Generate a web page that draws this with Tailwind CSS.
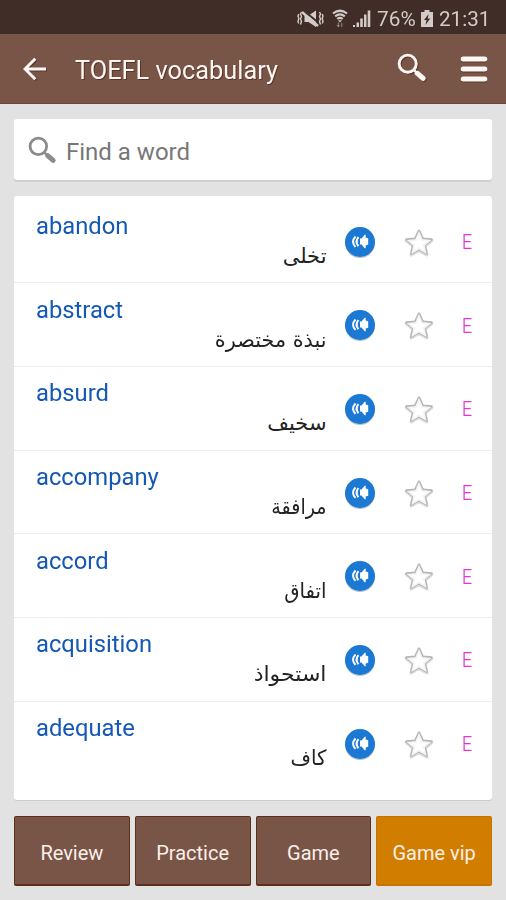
<!DOCTYPE html>
<html lang="en">
<head>
<meta charset="utf-8">
<meta name="viewport" content="width=device-width">
<title>TOEFL vocabulary</title>
<script src="https://cdn.jsdelivr.net/npm/@tailwindcss/browser@4"></script>
</head>
<body class="w-[506px] h-[900px] overflow-hidden bg-[#e2e2e2] font-[Roboto,sans-serif] flex flex-col">
<svg class="hidden">
  <symbol id="search" viewBox="0 0 28 28"><circle cx="10" cy="10" r="8" fill="none" stroke="currentColor" stroke-width="2.7"/><path d="M15.7 15.7l3 3" stroke="currentColor" stroke-width="2.4"/><path d="M19 19l5.3 4.6" stroke="currentColor" stroke-width="4.800" stroke-linecap="round"/></symbol>
</svg>

<header class="shrink-0">
  <div class="h-[34px] bg-[#402d27] flex items-center justify-end pr-[15px] pt-[3px] text-[#d3cbc7]">
    <svg class="w-[27px] h-[20px] mr-[8px]" viewBox="0 0 27 20" fill="none" stroke="currentColor">
      <path d="M7.500 6.500h4l7.500-5v16.500l-7.500-5h-4z" fill="currentColor" stroke="none"/>
      <path d="M6 1l17 14" stroke="#402d27" stroke-width="2"/><path d="M5 3l16 14" stroke-width="2.400"/>
      <path d="M4.500 3l-1 2 1 2.500-1 2.500 1 2.500-1 3M1.800 5l-.8 2 .8 2.500-.8 3 .8 2M22.500 3l1 2-1 2.500 1 2.500-1 2.500 1 3M25.200 5l.8 2-.8 2.500.8 3-.8 2" stroke-width="1.400"/>
    </svg>
    <svg class="w-[16px] h-[20px] mr-[5px]" viewBox="0 0 16 20" fill="none" stroke="currentColor">
      <path d="M1 4.500Q8-1 15 4.500M3.200 7.300q4.800-3.800 9.600 0M5.300 10q2.700-2.200 5.400 0" stroke-width="2.200"/><path d="M6 11.200h4L8 13.500z" fill="currentColor" stroke="none"/><path d="M6.300 13.500v4M4.800 16l1.500 1.700L7.500 16M9.800 18v-4" stroke-width="1" opacity=".6"/>
    </svg>
    <svg class="w-[18px] h-[20px] mr-[6px]" viewBox="0 0 18 20" fill="currentColor"><path d="M0 16h2v2H0zM3.500 13.500H6V18H3.500zM7.200 9.500h2.600V18H7.200zM11 5.500h2.500V18H11zM14.700 1.500h2.600V18h-2.600z"/></svg>
    <span class="text-[20px] leading-5 w-[39px] whitespace-nowrap"><span class="inline-block origin-left scale-x-[1.040]">76%</span></span>
    <svg class="w-[12px] h-[19px] ml-[5px] mr-[6px]" viewBox="0 0 12 19"><path d="M3.500 1h5v2H12v15H0V3h3.500z" fill="currentColor"/><path d="M7.600 5L3 11h2.500L4.500 16 9.200 9.500H6.700z" fill="#402d27"/></svg>
    <span class="text-[20px] leading-5 w-[52px] whitespace-nowrap"><span class="inline-block origin-left scale-x-[1.030]">21:31</span></span>
  </div>
  <div class="h-[70px] bg-[#795548] border-b border-[#6b483c] flex items-center text-[#fbf7f4]">
    <svg class="w-[24px] h-[24px] ml-[23px] mt-[1px] drop-shadow-[1px_1px_0_#5d3322]" viewBox="0 0 24 24" fill="none" stroke="currentColor" stroke-width="3"><path d="M23 12H2M12.300 1.700L2 12l10.300 10.300"/></svg>
    <h1 class="ml-[28px] mt-[4px] text-[25px] whitespace-nowrap w-[204px] [text-shadow:1px_1px_0_#5d3322]"><span class="inline-block origin-left scale-x-[1.013]">TOEFL vocabulary</span></h1>
    <svg class="w-[30px] h-[30px] ml-[118px] -mt-[1px] drop-shadow-[1px_1px_0_#5d3322]"><use href="#search"/></svg>
    <svg class="w-[28px] h-[28px] ml-[33px] drop-shadow-[0_1px_0_#5d3322]" viewBox="0 0 28 28" stroke="currentColor" stroke-width="5" stroke-linecap="round"><path d="M3.200 4h21.600M3.200 14h21.600M3.200 24h21.600"/></svg>
  </div>
</header>

<main class="px-[14px] pt-[15px] flex flex-col">
  <div class="h-[61px] rounded-[3px] bg-white shadow-[0_2px_0_#cfcfcf] flex items-center pl-[14px] text-[#777]">
    <svg class="w-[29px] h-[29px] mt-[1px] text-[#8b8b8b]"><use href="#search"/></svg>
    <span class="ml-[9px] mt-[4px] text-[24px] whitespace-nowrap">Find a word</span>
  </div>
  <ul id="words" class="mt-[15.500px] h-[604.500px] pt-[4px] rounded-[3px] bg-white shadow-[0_1px_0_#cdcdcd]"></ul>
  <nav class="mt-[16px] grid grid-cols-4 gap-[5px] h-[70px] text-[20px] text-[#fbefe8]">
    <button class="rounded-[2px] bg-[#795548] border border-[#602f1c] border-b-2 pt-[4px]">Review</button>
    <button class="rounded-[2px] bg-[#795548] border border-[#602f1c] border-b-2 pt-[4px]">Practice</button>
    <button class="rounded-[2px] bg-[#795548] border border-[#602f1c] border-b-2 pt-[4px]">Game</button>
    <button class="rounded-[2px] bg-[#d17d00] border border-[#c87300] border-b-2 pt-[4px] whitespace-nowrap">Game vip</button>
  </nav>
</main>

<template id="row">
  <li class="h-[83.700px] flex border-b border-[#eeeeee] last:border-0">
    <div class="w-[312.500px] pl-[22px] flex flex-col">
      <span class="en text-[24px] leading-[28px] mt-[12.500px] text-[#1458b5] origin-left scale-x-[.99]"></span>
      <span dir="rtl" lang="ar" class="ar origin-right text-[21px] leading-[28px] mt-[2px] text-[#222] font-['DejaVu_Sans',sans-serif]"></span>
    </div>
    <svg class="w-[34px] h-[34px] ml-[16.500px] mt-[25px]" viewBox="0 0 34 34">
      <circle cx="17" cy="18.300" r="14.800" fill="#b9c3cc"/><circle cx="17" cy="17" r="15" fill="#1b78d3"/>
      <path d="M17 13.500h1.500l3.200-3.700h1v2.700l2.500.8v6.400l-2.500.8v2.700h-1l-3.200-3.700H17z" fill="#fff"/>
      <path d="M12.500 11.500q-4.800 5.200 0 10.400M15.500 12.200q-4 4.600 0 9" fill="none" stroke="#fff" stroke-width="1.900"/><path d="M14.500 12v9.500" stroke="#fff" stroke-width="1" opacity=".45"/>
    </svg>
    <svg class="w-[34px] h-[32px] ml-[25px] mt-[26px]" viewBox="0 0 34 32">
      <path d="M17 5.700l3.700 8 8.900.8-6.800 5.700 1.900 8.600L17 24.200l-7.700 4.600 1.900-8.600-6.800-5.700 8.900-.8z" fill="#fff" stroke="#dedede" stroke-width="3.600" stroke-linejoin="round"/>
      <path d="M17 4.700l3.700 8 8.900.8-6.800 5.700 1.900 8.600L17 23.200l-7.700 4.600 1.900-8.600-6.800-5.700 8.900-.8z" fill="#fff" stroke="#b5b5b5" stroke-width="2.400" stroke-linejoin="round"/>
      <path d="M17 7l3 6.900 7.200.8-5.400 4.500 1.500 7L17 22.400l-6.300 3.800 1.500-7-5.400-4.500 7.200-.8z" fill="#fff" stroke="#f5f5f5" stroke-width="1.800"/>
    </svg>
    <span class="ml-[26px] mt-[28.500px] text-[20px] leading-[28px] font-light text-[#e235d4] [-webkit-text-stroke:.2px_#e235d4] origin-left scale-x-[.88]">E</span>
  </li>
</template>
<script>
// English word, Arabic translation, horizontal fit of the translation
const words = [
  ["abandon", "تخلى", "scale-x-[1]"],
  ["abstract", "نبذة مختصرة", "scale-x-[.99]"],
  ["absurd", "سخيف", "scale-x-[1]"],
  ["accompany", "مرافقة", "scale-x-[.91]"],
  ["accord", "اتفاق", "scale-x-[.94]"],
  ["acquisition", "استحواذ", "scale-x-[1.05]"],
  ["adequate", "كاف", "scale-x-[.94]"]
];
const list = document.getElementById("words");
const row = document.getElementById("row");
for (const [en, ar, fit] of words) {
  const item = row.content.cloneNode(true);
  item.querySelector(".en").textContent = en;
  item.querySelector(".ar").textContent = ar;
  item.querySelector(".ar").classList.add(fit);
  list.append(item);
}
</script>
</body>
</html>
